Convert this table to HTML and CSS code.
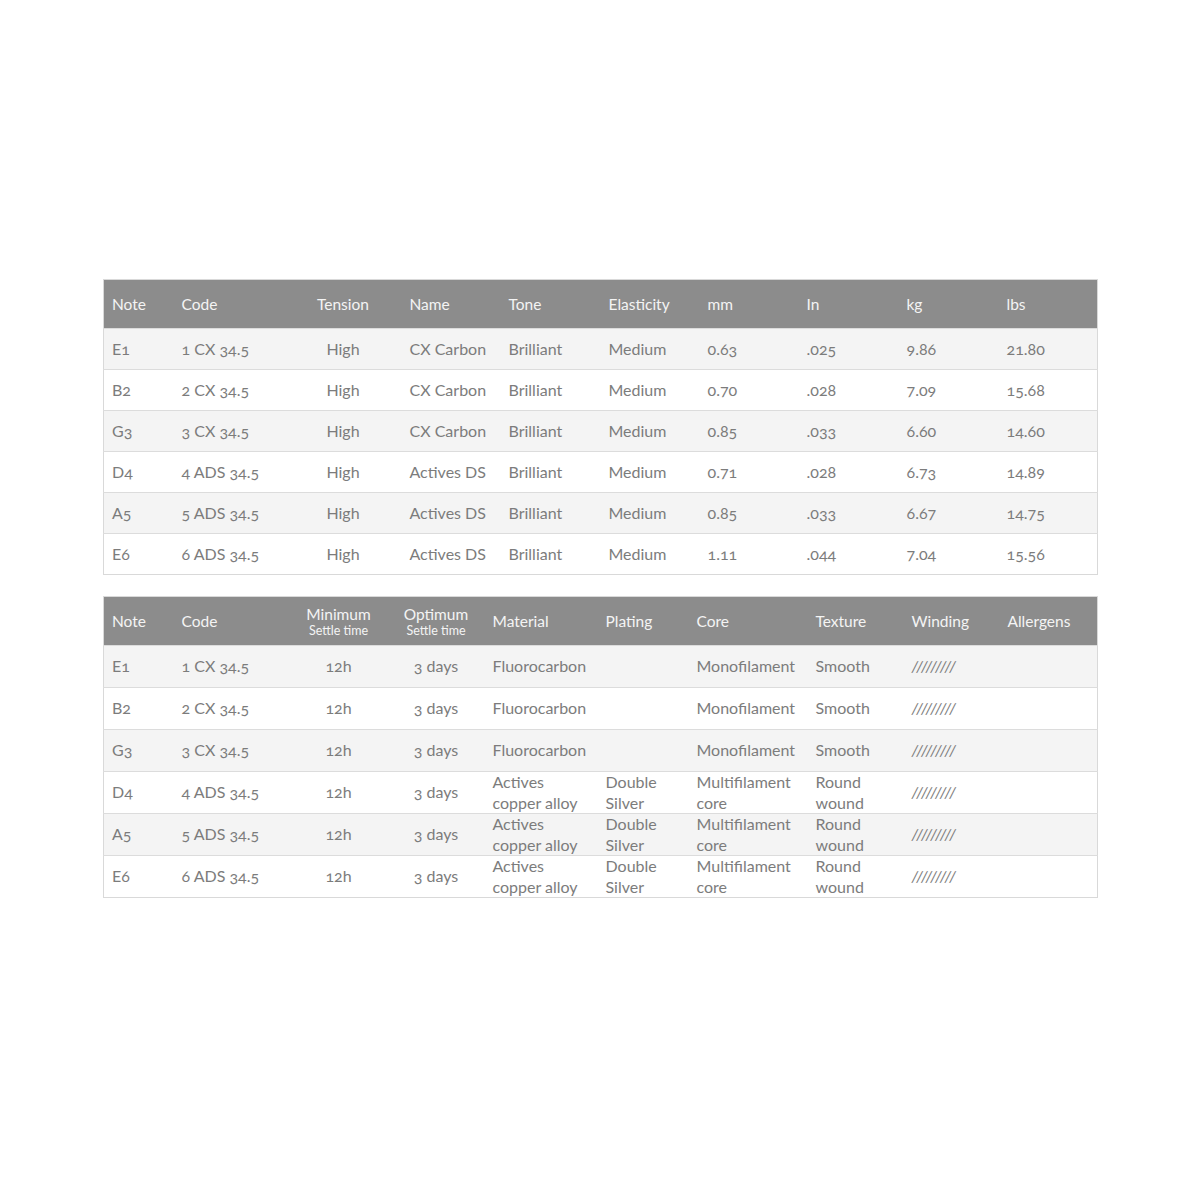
FILE: index.html
```html
<!DOCTYPE html>
<html lang="en">
<head>
<meta charset="utf-8">
<title>String specifications</title>
<link rel="stylesheet" href="styles.css">
</head>
<body>
<div class="page">
  <table class="spec spec-one">
    <colgroup>
      <col class="w70"><col class="w111"><col class="w117"><col class="w99"><col class="w100"><col class="w99"><col class="w99"><col class="w100"><col class="w100"><col class="w99">
    </colgroup>
    <thead>
      <tr><th>Note</th><th>Code</th><th class="center">Tension</th><th>Name</th><th>Tone</th><th>Elasticity</th><th>mm</th><th>In</th><th>kg</th><th>lbs</th></tr>
    </thead>
    <tbody>
      <tr><td>E1</td><td>1 CX 34.5</td><td class="center">High</td><td>CX Carbon</td><td>Brilliant</td><td>Medium</td><td>0.63</td><td>.025</td><td>9.86</td><td>21.80</td></tr>
      <tr><td>B2</td><td>2 CX 34.5</td><td class="center">High</td><td>CX Carbon</td><td>Brilliant</td><td>Medium</td><td>0.70</td><td>.028</td><td>7.09</td><td>15.68</td></tr>
      <tr><td>G3</td><td>3 CX 34.5</td><td class="center">High</td><td>CX Carbon</td><td>Brilliant</td><td>Medium</td><td>0.85</td><td>.033</td><td>6.60</td><td>14.60</td></tr>
      <tr><td>D4</td><td>4 ADS 34.5</td><td class="center">High</td><td>Actives DS</td><td>Brilliant</td><td>Medium</td><td>0.71</td><td>.028</td><td>6.73</td><td>14.89</td></tr>
      <tr><td>A5</td><td>5 ADS 34.5</td><td class="center">High</td><td>Actives DS</td><td>Brilliant</td><td>Medium</td><td>0.85</td><td>.033</td><td>6.67</td><td>14.75</td></tr>
      <tr><td>E6</td><td>6 ADS 34.5</td><td class="center">High</td><td>Actives DS</td><td>Brilliant</td><td>Medium</td><td>1.11</td><td>.044</td><td>7.04</td><td>15.56</td></tr>
    </tbody>
  </table>

  <table class="spec spec-two">
    <colgroup>
      <col class="w70"><col class="w116"><col class="w98"><col class="w97"><col class="w113"><col class="w91"><col class="w119"><col class="w96"><col class="w96"><col class="w98">
    </colgroup>
    <thead>
      <tr><th>Note</th><th>Code</th><th class="center">Minimum<span class="sub">Settle time</span></th><th class="center">Optimum<span class="sub">Settle time</span></th><th>Material</th><th>Plating</th><th>Core</th><th>Texture</th><th>Winding</th><th>Allergens</th></tr>
    </thead>
    <tbody>
      <tr><td>E1</td><td>1 CX 34.5</td><td class="center">12h</td><td class="center">3 days</td><td>Fluorocarbon</td><td></td><td>Monofilament</td><td>Smooth</td><td class="wind">/////////</td><td></td></tr>
      <tr><td>B2</td><td>2 CX 34.5</td><td class="center">12h</td><td class="center">3 days</td><td>Fluorocarbon</td><td></td><td>Monofilament</td><td>Smooth</td><td class="wind">/////////</td><td></td></tr>
      <tr><td>G3</td><td>3 CX 34.5</td><td class="center">12h</td><td class="center">3 days</td><td>Fluorocarbon</td><td></td><td>Monofilament</td><td>Smooth</td><td class="wind">/////////</td><td></td></tr>
      <tr><td>D4</td><td>4 ADS 34.5</td><td class="center">12h</td><td class="center">3 days</td><td>Actives<br>copper alloy</td><td>Double<br>Silver</td><td>Multifilament<br>core</td><td>Round<br>wound</td><td class="wind">/////////</td><td></td></tr>
      <tr><td>A5</td><td>5 ADS 34.5</td><td class="center">12h</td><td class="center">3 days</td><td>Actives<br>copper alloy</td><td>Double<br>Silver</td><td>Multifilament<br>core</td><td>Round<br>wound</td><td class="wind">/////////</td><td></td></tr>
      <tr><td>E6</td><td>6 ADS 34.5</td><td class="center">12h</td><td class="center">3 days</td><td>Actives<br>copper alloy</td><td>Double<br>Silver</td><td>Multifilament<br>core</td><td>Round<br>wound</td><td class="wind">/////////</td><td></td></tr>
    </tbody>
  </table>
</div>
</body>
</html>
```

FILE: styles.css
```css
html, body {
  margin: 0;
  padding: 0;
  background: #ffffff;
}

body {
  font-family: "Lato", "Noto Sans", "Liberation Sans", sans-serif;
  font-variant-numeric: oldstyle-nums;
  font-feature-settings: "onum" 1;
  color: #7c7c7c;
}

.page {
  width: 994px;
  margin: 0 auto;
  padding-top: 279px;
  display: flex;
  flex-direction: column;
  gap: 21px;
}

.spec {
  width: 994px;
  border-collapse: collapse;
  table-layout: fixed;
  border: 1px solid #d9d9d9;
  font-size: 16px;
}

.w70 { width: 70px; }
.w91 { width: 91px; }
.w96 { width: 96px; }
.w97 { width: 97px; }
.w98 { width: 98px; }
.w99 { width: 99px; }
.w100 { width: 100px; }
.w111 { width: 111px; }
.w113 { width: 113px; }
.w116 { width: 116px; }
.w117 { width: 117px; }
.w119 { width: 119px; }

.spec th {
  background: #8c8c8c;
  color: #f4f4f4;
  font-weight: 400;
  font-size: 15.5px;
  text-align: left;
  height: 48px;
  padding: 0 8px;
  vertical-align: middle;
  line-height: 18px;
  white-space: nowrap;
}

.spec th .sub {
  display: block;
  font-size: 12.5px;
  line-height: 15px;
}

.spec td {
  padding: 0 8px;
  vertical-align: middle;
  line-height: 20.5px;
  border-top: 1px solid #dcdcdc;
  white-space: nowrap;
}

.spec-one td { height: 40px; }
.spec-two td { height: 41px; }

.spec tbody tr:nth-child(odd) td { background: #f4f4f4; }
.spec tbody tr:nth-child(even) td { background: #ffffff; }

.spec .center { text-align: center; }

.spec td.wind {
  font-style: italic;
  letter-spacing: 1.2px;
}
```
